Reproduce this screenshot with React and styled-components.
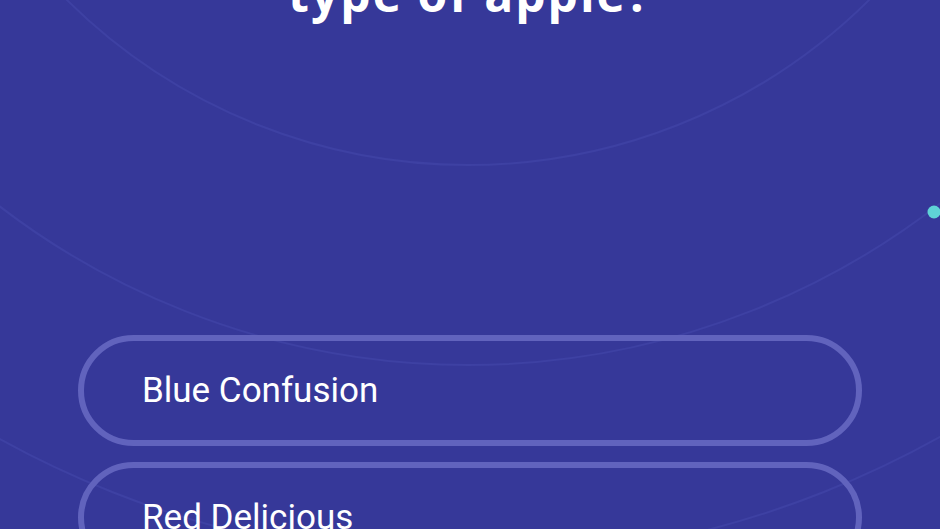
import React from "react";
import styled, { createGlobalStyle } from "styled-components";

const Global = createGlobalStyle`
  html, body { margin: 0; padding: 0; background: #363899; }
  body { overflow: hidden; }
`;

const Screen = styled.div`
  position: relative;
  width: 940px;
  height: 529px;
  overflow: hidden;
  background: #363899;
  display: flex;
  flex-direction: column;
`;

const Backdrop = styled.svg`
  position: absolute;
  left: 0;
  top: 0;
  width: 940px;
  height: 529px;
  pointer-events: none;
`;

const Content = styled.div`
  position: relative;
  display: flex;
  flex-direction: column;
`;

const Question = styled.h1`
  margin: -30px 0 0;
  font-family: "Open Sans", "Liberation Sans", sans-serif;
  font-weight: 700;
  font-size: 48px;
  line-height: 48px;
  color: #ffffff;
  text-align: center;
  letter-spacing: 2px;
`;

const Options = styled.div`
  display: flex;
  flex-direction: column;
  gap: 16px;
  margin: 317px 0 0 78px;
  width: 784px;
`;

const Option = styled.button`
  box-sizing: border-box;
  height: 111px;
  width: 100%;
  border: 6px solid #6163bd;
  border-radius: 56px;
  background: transparent;
  padding: 0 0 0 58px;
  display: flex;
  align-items: center;
  font-family: Roboto, "Liberation Sans", sans-serif;
  font-size: 35px;
  font-weight: 400;
  color: #ffffff;
  text-align: left;
  cursor: pointer;
`;

const rings = [570, 770, 965];

export default function App() {
  return (
    <>
      <Global />
      <Screen>
        <Backdrop viewBox="0 0 940 529">
          {rings.map((r) => (
            <circle
              key={r}
              cx="468"
              cy="-405"
              r={r}
              fill="none"
              stroke="#3e41a3"
              strokeWidth="2"
            />
          ))}
          <circle cx="934" cy="212" r="6.5" fill="#5fd3d6" />
        </Backdrop>
        <Content>
          <Question>type of apple?</Question>
          <Options>
            <Option>Blue Confusion</Option>
            <Option>Red Delicious</Option>
          </Options>
        </Content>
      </Screen>
    </>
  );
}
